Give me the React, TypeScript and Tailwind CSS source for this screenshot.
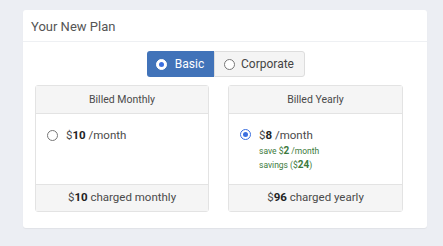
import React, { useState } from 'react';

type Plan = 'basic' | 'corporate';
type Billing = 'monthly' | 'yearly';

const Radio: React.FC<{ checked: boolean; light?: boolean }> = ({ checked, light }) => (
  <span
    className={`flex h-[11px] w-[11px] shrink-0 items-center justify-center rounded-full border ${
      checked ? (light ? 'border-white bg-white' : 'border-[#3b6fe0] bg-white') : 'border-[#777] bg-white'
    }`}
  >
    {checked && <span className="h-[5px] w-[5px] rounded-full bg-[#3b6fe0]" />}
  </span>
);

const App: React.FC = () => {
  const [plan, setPlan] = useState<Plan>('basic');
  const [billing, setBilling] = useState<Billing>('yearly');

  return (
    <div className="h-[246px] w-[443px] bg-[#eceef3] pt-[10px] pl-[23px] font-['Roboto',sans-serif] font-normal text-[#4a4a4a]">
      <div className="w-[404px] rounded-[3px] bg-white pb-[16px] shadow-[0_1px_1px_rgba(0,0,0,0.05)]">
        <div className="h-[32px] border-b border-[#eef0f3] pl-[8px] pt-[7px] text-[13px] text-[#555]">
          Your New Plan
        </div>

        <div className="flex justify-center pt-[9px] pl-[1px]">
          <button
            onClick={() => setPlan('basic')}
            className={`flex h-[26px] w-[67px] items-center justify-center gap-[8px] rounded-l-[3px] text-[12px] ${
              plan === 'basic' ? 'bg-[#4173b9] text-white' : 'border border-[#ddd] bg-[#f4f4f4] text-[#444]'
            }`}
          >
            <Radio checked={plan === 'basic'} light />
            Basic
          </button>
          <button
            onClick={() => setPlan('corporate')}
            className={`flex h-[26px] w-[91px] items-center justify-center gap-[6px] rounded-r-[3px] text-[12px] ${
              plan === 'corporate' ? 'bg-[#4173b9] text-white' : 'border border-[#ddd] bg-[#f4f4f4] text-[#444]'
            }`}
          >
            <Radio checked={plan === 'corporate'} light />
            Corporate
          </button>
        </div>

        <div className="mt-[8px] flex gap-[19px] pl-[12px]">
          <div
            onClick={() => setBilling('monthly')}
            className="flex h-[127px] w-[174px] cursor-pointer flex-col rounded-[3px] border border-[#e3e3e3]"
          >
            <div className="flex h-[28px] items-center justify-center border-b border-[#e3e3e3] bg-[#f5f5f5] text-[10.5px]">
              Billed Monthly
            </div>
            <div className="flex flex-1 items-start gap-[8px] pl-[11px] pt-[13px]">
              <span className="mt-[3px]">
                <Radio checked={billing === 'monthly'} />
              </span>
              <span className="text-[11.5px] leading-[16px]">
                $<b className="text-[#222]">10</b> /month
              </span>
            </div>
            <div className="flex h-[27px] items-center justify-center border-t border-[#e3e3e3] bg-[#f5f5f5] text-[11.5px]">
              <span>
                $<b className="text-[#222]">10</b> charged monthly
              </span>
            </div>
          </div>

          <div
            onClick={() => setBilling('yearly')}
            className="flex h-[127px] w-[175px] cursor-pointer flex-col rounded-[3px] border border-[#e3e3e3]"
          >
            <div className="flex h-[28px] items-center justify-center border-b border-[#e3e3e3] bg-[#f5f5f5] text-[10.5px]">
              Billed Yearly
            </div>
            <div className="flex flex-1 items-start gap-[8px] pl-[11px] pt-[13px]">
              <span className="mt-[2px]">
                <Radio checked={billing === 'yearly'} />
              </span>
              <div className="flex flex-col">
                <span className="text-[11.5px] leading-[16px]">
                  $<b className="text-[#222]">8</b> /month
                </span>
                <span className="mt-[1px] text-[8.5px] leading-[14px] text-[#3d7a3d]">
                  save $<b className="text-[10px]">2</b> /month
                </span>
                <span className="text-[8.5px] leading-[14px] text-[#3d7a3d]">
                  savings ($<b className="text-[10px]">24</b>)
                </span>
              </div>
            </div>
            <div className="flex h-[27px] items-center justify-center border-t border-[#e3e3e3] bg-[#f5f5f5] text-[11.5px]">
              <span>
                $<b className="text-[#222]">96</b> charged yearly
              </span>
            </div>
          </div>
        </div>
      </div>
    </div>
  );
};

export default App;
